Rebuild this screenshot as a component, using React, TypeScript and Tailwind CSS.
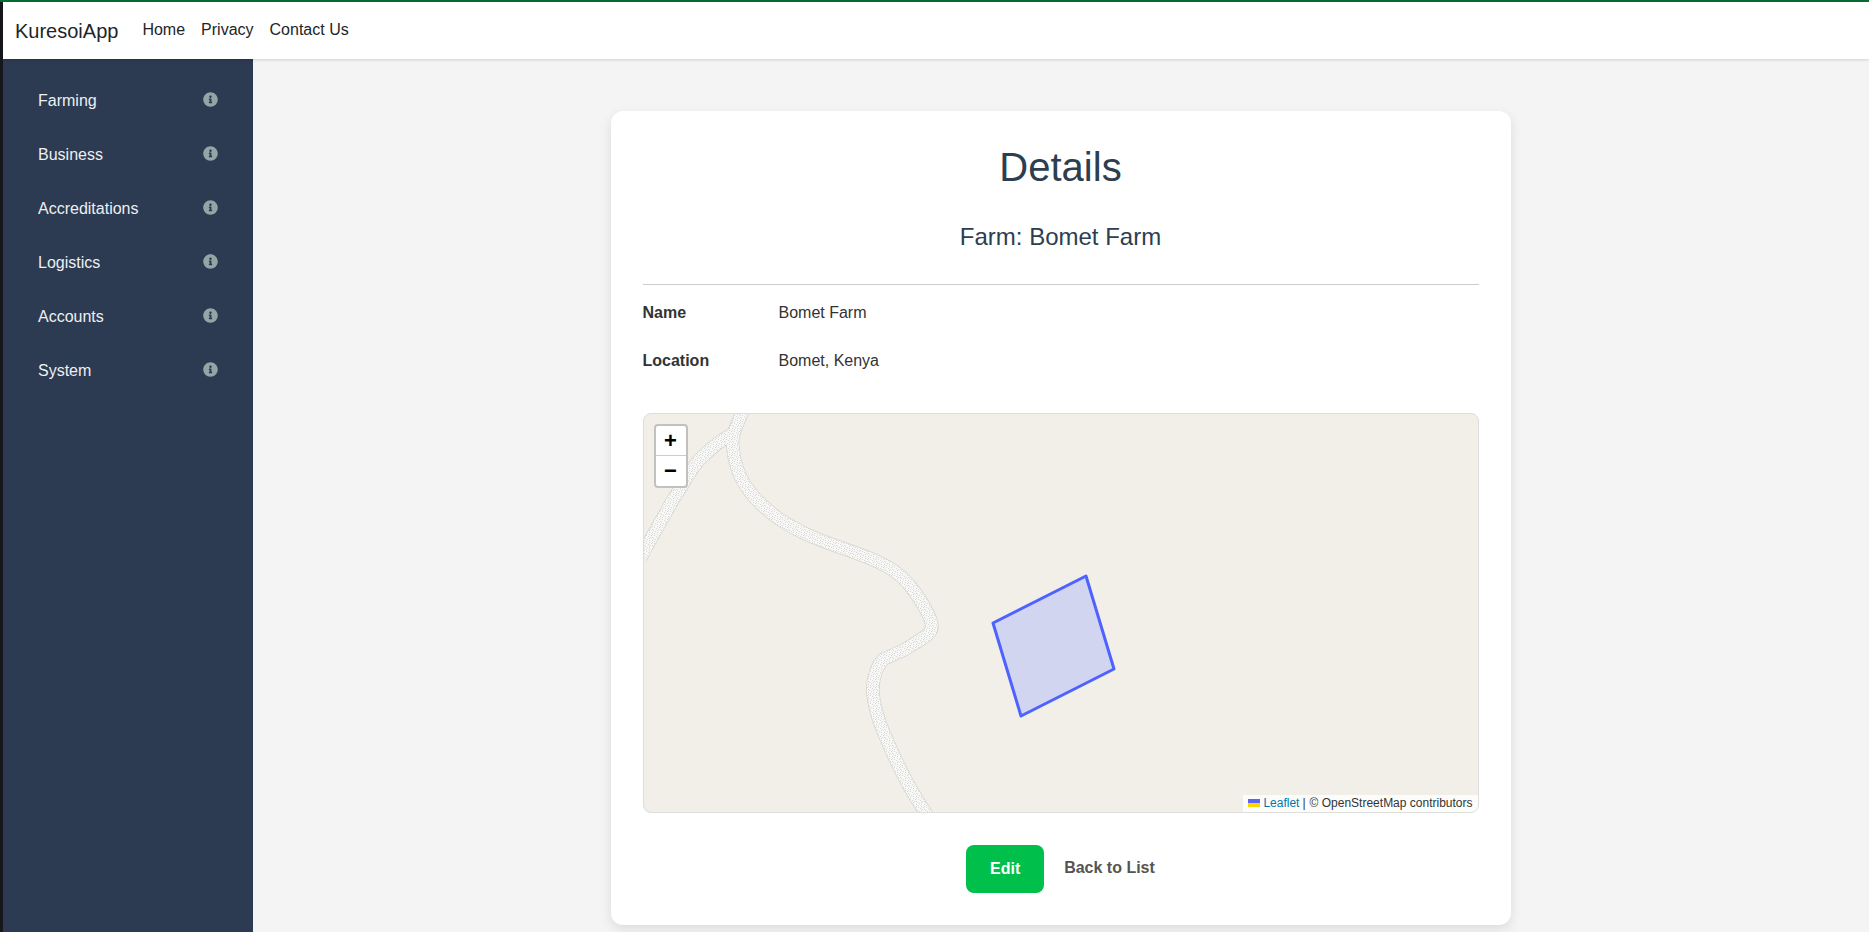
import {FaInfoCircle} from "react-icons/fa";

const sideItems = ["Farming", "Business", "Accreditations", "Logistics", "Accounts", "System"]
const navLinks = ["Home", "Privacy", "Contact Us"]

// road lines in map coordinates (map box starts at 643,413 on the page)
const mainRoad = "M99 -4 C93 12 87 20 89 34 C91 58 102 76 117 90 C132 104 142 110 160 119 C180 129 200 134 220 142 C244 151 258 160 270 177 C280 191 287 203 288 212 C288 220 279 224 268 231 C258 238 248 241 240 245 C232 252 228 266 229 280 C231 300 240 320 250 342 C260 364 270 382 285 404"
const branchRoad = "M90 19 C76 26 68 34 57 44 C46 55 40 70 30 84 C20 102 8 122 -4 145"

// stipple of the road fill
const roadDots = [[0,0],[5,0],[2,1],[7,1],[4,2],[0,3],[6,3],[1,4],[5,4],[3,5],[0,6],[5,6],[2,7]]

export default function App() {
  return (
    <div className="flex h-[932px] w-full flex-col overflow-hidden bg-[#f4f4f4] font-['Liberation_Sans',Arial,sans-serif]">
      <div className="h-[2px] w-full bg-[#0b6b35]"/>
      <div className="flex min-h-0 flex-1">
        <div className="w-[3px] bg-[#16171a]"/>
        <div className="flex min-w-0 flex-1 flex-col">
          <nav className="z-10 flex h-[57px] items-center bg-white pl-3 shadow-[0_1px_3px_rgba(0,0,0,0.15)]">
            <a className="mr-[24px] text-[20px] text-[#212529]">KuresoiApp</a>
            <div className="flex gap-[16px] text-[16px] text-[#212529] pb-[1px]">
              {navLinks.map((link) => (
                <a key={link}>{link}</a>
              ))}
            </div>
          </nav>

          <div className="flex min-h-0 flex-1">
            <aside className="w-[250px] bg-[#2c3a52] pt-[14px] text-[16px] text-[#ecf0f1]">
              {sideItems.map((item) => (
                <div key={item} className="flex h-[54px] items-center justify-between pl-[35px] pr-[35px]">
                  <span className="pt-[2px]">{item}</span>
                  <FaInfoCircle size={15} className="-mt-[1px] text-[#95a5a6]"/>
                </div>
              ))}
            </aside>

            <main className="flex flex-1 justify-center pt-[52px] pr-[1px]">
              <div className="flex h-[814px] w-[900px] flex-col rounded-[12px] bg-white px-8 pt-[32px] shadow-[0_4px_12px_rgba(0,0,0,0.1)]">
                <h1 className="text-center text-[40px] leading-[48px] text-[#2c3e50]">Details</h1>
                <h4 className="mt-[31px] text-center text-[24px] leading-[29px] text-[#2c3e50]">Farm: Bomet Farm</h4>
                <hr className="mt-[33px] border-t border-[#cccccc]"/>
                <dl className="mt-[18px] text-[16px] leading-[19px] text-[#333333]">
                  <div className="flex">
                    <dt className="w-[136px] font-bold">Name</dt>
                    <dd>Bomet Farm</dd>
                  </div>
                  <div className="mt-[29px] flex">
                    <dt className="w-[136px] font-bold">Location</dt>
                    <dd>Bomet, Kenya</dd>
                  </div>
                </dl>

                <div className="relative mt-[43px] h-[400px] w-full overflow-hidden rounded-[8px] border border-[#dddddd] bg-[#f2efe9]">
                  <svg width="836" height="400" viewBox="0 0 836 400" className="block">
                    <defs>
                      <pattern id="roadDots" width="8" height="8" patternUnits="userSpaceOnUse">
                        <rect width="8" height="8" fill="#f7f7f6"/>
                        {roadDots.map(([x, y]) => (
                          <rect key={`${x}-${y}`} x={x} y={y} width="1" height="1" fill="#d8d8d8"/>
                        ))}
                      </pattern>
                    </defs>
                    <path d={mainRoad} fill="none" stroke="#d6d4d0" strokeWidth="13.5"/>
                    <path d={branchRoad} fill="none" stroke="#d6d4d0" strokeWidth="13.5"/>
                    <path d={mainRoad} fill="none" stroke="url(#roadDots)" strokeWidth="12"/>
                    <path d={branchRoad} fill="none" stroke="url(#roadDots)" strokeWidth="12"/>
                    <polygon
                      points="349,209 442,162 470,255 377,302"
                      fill="#d2d5f0"
                      stroke="#4d62ff"
                      strokeWidth="3"
                      strokeLinejoin="round"
                    />
                  </svg>

                  <div className="absolute left-[10px] top-[10px] w-[34px] overflow-hidden rounded-[4px] border-2 border-[#c2c1bd] bg-white text-black">
                    <div className="flex h-[30px] items-center justify-center border-b border-[#cccccc] text-[22px] font-bold leading-none">+</div>
                    <div className="flex h-[30px] items-center justify-center text-[22px] font-bold leading-none">−</div>
                  </div>

                  <div className="absolute bottom-0 right-0 flex h-[17px] items-center bg-white/80 pl-[5px] pr-[5px] pb-[1px] text-[12px] text-[#333333]">
                    <svg width="12" height="8" viewBox="0 0 12 8" className="mr-[3px]">
                      <rect width="12" height="4" fill="#5d64f0"/>
                      <rect y="4" width="12" height="4" fill="#ffd500"/>
                    </svg>
                    <a className="text-[#0078a8]">Leaflet</a>
                    <span className="ml-[3px] mr-[4px]">|</span>
                    <span>© OpenStreetMap contributors</span>
                  </div>
                </div>

                <div className="mt-[32px] flex items-center justify-center">
                  <a className="flex h-[48px] w-[78px] items-center justify-center rounded-[8px] bg-[#00c04b] text-[16px] font-bold text-white">Edit</a>
                  <a className="ml-[20px] pb-[2px] text-[16px] font-bold text-[#555555]">Back to List</a>
                </div>
              </div>
            </main>
          </div>
        </div>
      </div>
    </div>
  )
}
